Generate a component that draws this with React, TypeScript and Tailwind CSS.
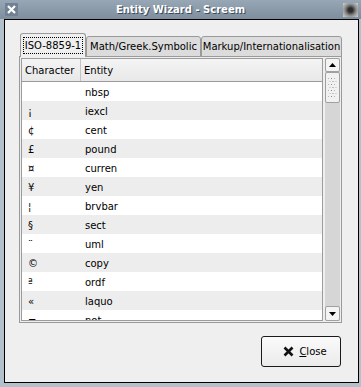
const rows: [string, string][] = [
  ["\u00a0", "nbsp"],
  ["¡", "iexcl"],
  ["¢", "cent"],
  ["£", "pound"],
  ["¤", "curren"],
  ["¥", "yen"],
  ["¦", "brvbar"],
  ["§", "sect"],
  ["¨", "uml"],
  ["©", "copy"],
  ["ª", "ordf"],
  ["«", "laquo"],
  ["¬", "not"],
];

function Grip() {
  return (
    <svg width="9" height="20" viewBox="0 0 9 20">
      {[0, 1, 2, 3, 4, 5, 6].map((r) =>
        [0, 1, 2].map((c) => (
          <rect
            key={`${r}-${c}`}
            x={c * 3 + (r % 2) * 1.5}
            y={r * 3}
            width="1"
            height="1"
            fill={c === 1 ? "#8a8a8a" : "#b5b5b5"}
          />
        ))
      )}
    </svg>
  );
}

export default function App() {
  return (
    <div className="flex h-[387px] w-[361px] flex-col bg-[#b3c1cd] font-['DejaVu_Sans',sans-serif] text-[10px] text-black">
      {/* title bar */}
      <div className="flex h-[19px] shrink-0 items-center bg-gradient-to-b from-[#98a7b5] to-[#7e8e9e] pl-[5px] pr-[3px]">
        <div className="flex h-[13px] w-[13px] items-center justify-center rounded-[1px] bg-[#6f8192]">
          <svg width="9" height="9" viewBox="0 0 9 9">
            <path d="M1 1 L8 8 M8 1 L1 8" stroke="white" strokeWidth="2.2" />
          </svg>
        </div>
        <div className="flex-1 text-center text-[10px] font-bold text-white [text-shadow:1px_1px_0_#3d4a57]">
          Entity Wizard - Screem
        </div>
        <div className="h-[14px] w-[15px] bg-[radial-gradient(circle,#2b2b2b_20%,#8d8d8d_55%,#d6d6d6_100%)]" />
      </div>

      {/* dialog body */}
      <div className="mb-[4px] ml-[4px] mr-[2px] flex flex-1 flex-col border border-black bg-[#efefef] pt-[13px]">
        <div className="ml-[14px] w-[323px]">
          {/* tabs */}
          <div className="relative z-10 -mb-px flex items-end pl-px">
            <div className="flex h-[24px] w-[66px] items-center justify-center rounded-t-[3px] border border-b-0 border-[#9a9a9a] bg-[#efefef]">
              <span className="border border-dotted border-black px-[1px] leading-[15px]">ISO-8859-1</span>
            </div>
            <div className="flex h-[21px] w-[115px] items-center justify-center rounded-t-[3px] border border-[#9a9a9a] bg-[#dcdcdc]">
              Math/Greek.Symbolic
            </div>
            <div className="flex h-[21px] flex-1 items-center justify-center rounded-t-[3px] border border-[#9a9a9a] bg-[#dcdcdc]">
              Markup/Internationalisation
            </div>
          </div>

          {/* panel */}
          <div className="flex h-[267px] gap-[2px] border border-[#9a9a9a] p-px">
            {/* tree view */}
            <div className="flex h-[263px] w-[302px] flex-col overflow-hidden border border-[#9c9c9c] bg-white">
              <div className="flex h-[23px] shrink-0 border-b border-[#9a9a9a] bg-gradient-to-b from-[#f4f4f4] to-[#e8e8e8]">
                <div className="flex w-[59px] items-center border-r border-[#c4c4c4] pl-[3px]">Character</div>
                <div className="flex flex-1 items-center pl-[3px]">Entity</div>
              </div>
              {rows.map(([ch, name], i) => (
                <div
                  key={name}
                  className={`flex h-[19px] shrink-0 items-center pt-[2px] ${i % 2 ? "bg-[#ededed]" : "bg-white"}`}
                >
                  <div className="w-[59px] pl-[6px]">{ch}</div>
                  <div className="pl-[4px]">{name}</div>
                </div>
              ))}
            </div>

            {/* scrollbar */}
            <div className="flex h-[263px] w-[15px] flex-col bg-[#d6d6d6]">
              <div className="flex h-[14px] items-center justify-center rounded-[2px] border border-[#a0a0a0] bg-[#f4f4f4]">
                <svg width="7" height="4" viewBox="0 0 7 4">
                  <path d="M0 4 L3.5 0 L7 4 Z" fill="#000" />
                </svg>
              </div>
              <div className="flex h-[31px] items-center justify-center rounded-[2px] border border-[#a0a0a0] bg-[#f1f1f1]">
                <Grip />
              </div>
              <div className="flex-1" />
              <div className="flex h-[15px] items-center justify-center rounded-[2px] border border-[#a0a0a0] bg-[#f4f4f4]">
                <svg width="7" height="4" viewBox="0 0 7 4">
                  <path d="M0 0 L7 0 L3.5 4 Z" fill="#000" />
                </svg>
              </div>
            </div>
          </div>
        </div>

        {/* close button */}
        <div className="mr-[17px] mt-[13px] flex justify-end">
          <div className="flex h-[31px] w-[80px] items-center justify-center gap-[5px] rounded-[3px] border border-[#1a1a1a] bg-gradient-to-b from-[#fafafa] to-[#ebebeb] pl-[8px] text-[10px]">
            <svg width="11" height="11" viewBox="0 0 11 11">
              <path d="M1.5 1.5 L9.5 9.5 M9.5 1.5 L1.5 9.5" stroke="#111" strokeWidth="2.6" />
            </svg>
            <span>
              <span className="underline">C</span>lose
            </span>
          </div>
        </div>
      </div>
    </div>
  );
}
